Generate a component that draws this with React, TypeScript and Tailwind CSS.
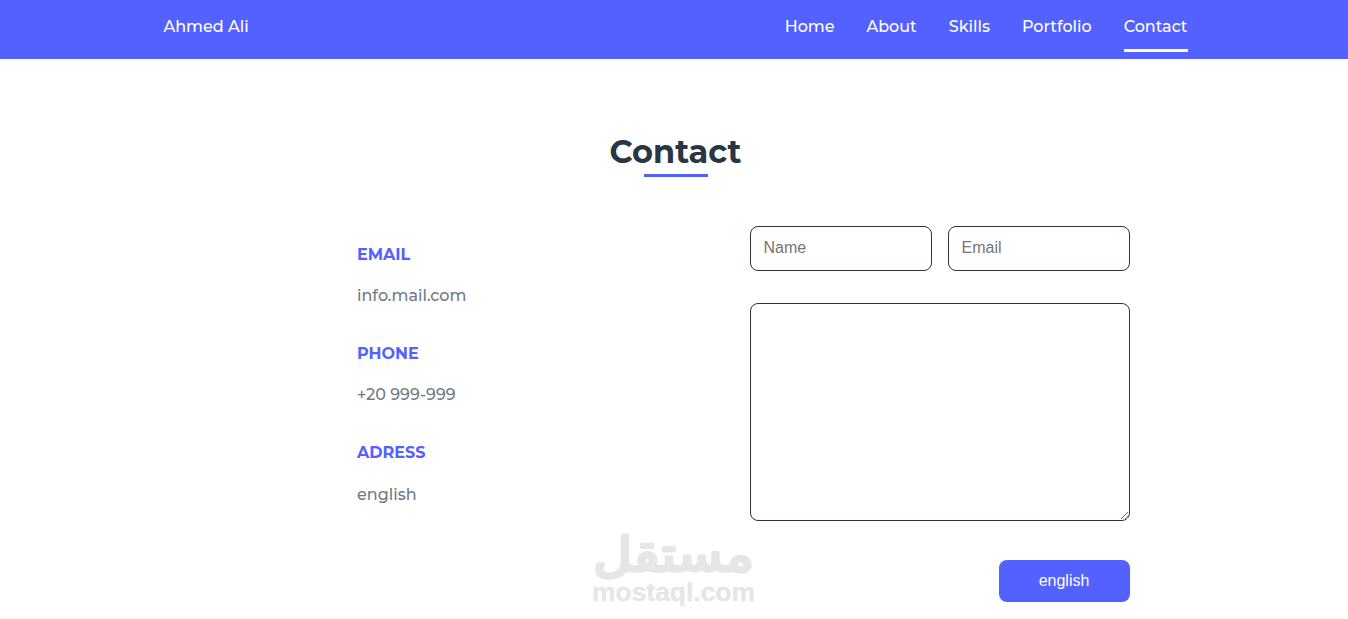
import { useState } from "react";
import { clsx } from "clsx";

const links = ["Home", "About", "Skills", "Portfolio", "Contact"];

const details = [
  { title: "EMAIL", value: "info.mail.com" },
  { title: "PHONE", value: "+20 999-999" },
  { title: "ADRESS", value: "english" },
];

const Navbar = () => {
  const [active, setActive] = useState("Contact");

  return (
    <header className="h-[59px] bg-[#5361ff] text-base font-medium text-white">
      <div className="ml-[163.5px] flex w-[1024px] justify-between pt-[15px]">
        <a href="#home" className="h-6 leading-6 whitespace-nowrap">
          Ahmed Ali
        </a>
        <nav className="flex gap-8" aria-label="Main navigation">
          {links.map((link) => (
            <a
              key={link}
              href={`#${link.toLowerCase()}`}
              onClick={() => setActive(link)}
              className={clsx(
                "h-[37px] border-b-3 leading-6 whitespace-nowrap",
                active === link ? "border-white" : "border-transparent"
              )}
            >
              {link}
            </a>
          ))}
        </nav>
      </div>
    </header>
  );
};

const ContactDetails = () => (
  <div className="flex w-[393px] flex-col gap-[33px] pt-[17px]">
    {details.map((item) => (
      <div key={item.title} className="group h-[66px]">
        <h3 className="text-base leading-6 font-bold text-[#5361ff]">
          {item.title}
        </h3>
        <p className="mt-[17px] text-base leading-6 font-medium text-[#707b82] group-last:mt-[18px]">
          {item.value}
        </p>
      </div>
    ))}
  </div>
);

const inputStyle =
  "block rounded-lg border border-[#293643] px-[12.5px] font-['Liberation_Sans',sans-serif] text-base text-[#293643] outline-none placeholder:text-[#757575]";

const ContactForm = () => (
  <form className="w-[380px]" onSubmit={(e) => e.preventDefault()}>
    <div className="flex gap-4">
      <input
        type="text"
        placeholder="Name"
        className={clsx(inputStyle, "h-[45px] w-[182px] pb-0.5")}
      />
      <input
        type="email"
        placeholder="Email"
        className={clsx(inputStyle, "h-[45px] w-[182px] pb-0.5")}
      />
    </div>
    <textarea
      aria-label="Message"
      className={clsx(inputStyle, "mt-8 h-[218px] w-full resize py-3")}
    />
    <button
      type="submit"
      className="mt-[39px] ml-auto block h-[42px] w-[131px] rounded-lg bg-[#5361ff] pr-px pb-px font-['Liberation_Sans',sans-serif] text-base text-white"
    >
      english
    </button>
  </form>
);

const Watermark = () => (
  <svg
    className="pointer-events-none absolute top-[505px] left-[575px]"
    width="200"
    height="114"
    viewBox="-10 -20 200 114"
    fill="#e6e6e6"
    stroke="#e6e6e6"
    strokeLinejoin="round"
  >
    <text
      x="8"
      y="46"
      textLength="161"
      lengthAdjust="spacingAndGlyphs"
      strokeWidth="3.2"
      className="font-['DejaVu_Sans',sans-serif] text-[48px] font-normal"
    >
      مستقل
    </text>
    <text
      x="7"
      y="76"
      textLength="163"
      lengthAdjust="spacingAndGlyphs"
      strokeWidth="0.3"
      className="font-['Liberation_Sans',sans-serif] text-[26px] font-bold"
    >
      mostaql.com
    </text>
  </svg>
);

const App = () => (
  <div className="relative h-[619px] overflow-hidden bg-white font-['Montserrat',sans-serif]">
    <Navbar />
    <main className="ml-[163.5px] w-[1024px]">
      <div className="flex flex-col items-center pt-[73px]">
        <h2 className="h-[42px] text-[32px] leading-10 font-bold text-[#293643]">
          Contact
        </h2>
        <span className="ml-px h-[3px] w-16 bg-[#5361ff]" />
      </div>
      <section className="mt-[49px] ml-[193.5px] flex">
        <ContactDetails />
        <ContactForm />
      </section>
    </main>
    <Watermark />
  </div>
);

export default App;
